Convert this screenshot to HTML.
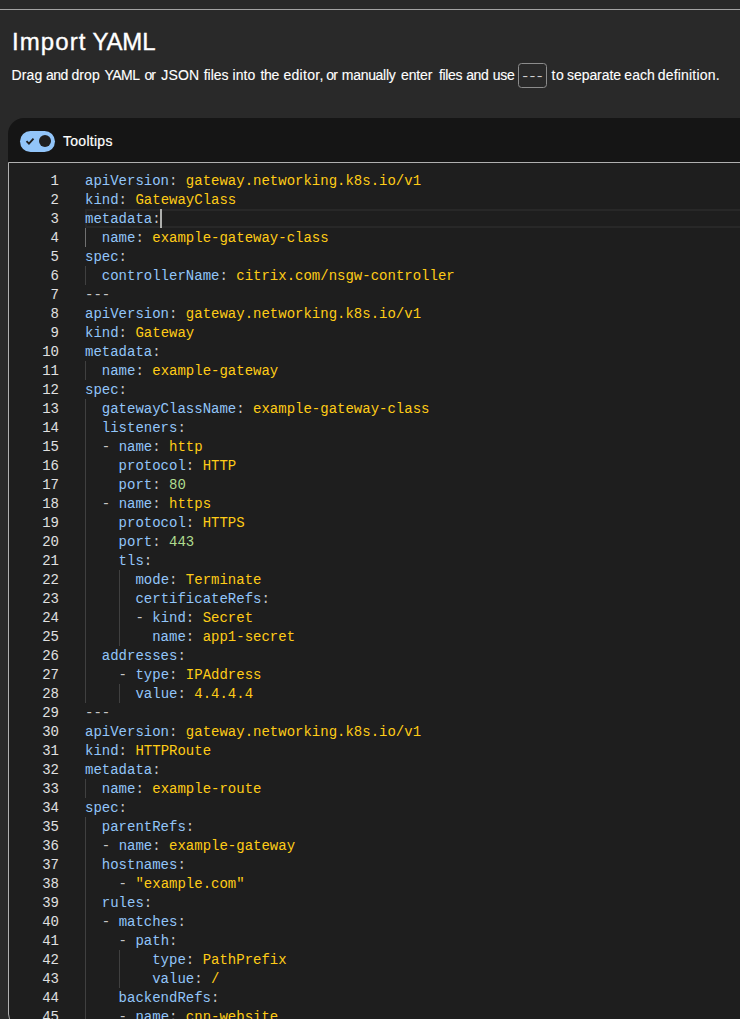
<!DOCTYPE html>
<html lang="en">
<head>
<meta charset="utf-8">
<title>Import YAML</title>
<style>
html,body{margin:0;padding:0;}
body{width:740px;height:1019px;overflow:hidden;background:#292929;color:#fff;font-family:"Liberation Sans",sans-serif;position:relative;}
.topline{position:absolute;left:0;top:9px;width:740px;height:1px;background:#a3a3a3;}
h1{position:absolute;left:12px;top:26px;margin:0;font-size:24px;line-height:31px;font-weight:400;white-space:nowrap;letter-spacing:0;-webkit-text-stroke:0.35px #fff;}
p.desc{position:absolute;left:12px;top:64px;margin:0;font-size:14px;line-height:21px;white-space:nowrap;}
p.desc .w{position:absolute;top:0.5px;-webkit-text-stroke:0.12px #fff;}
p.desc code{position:absolute;left:506px;top:-1px;box-sizing:border-box;font-family:"Liberation Mono",monospace;font-size:12px;line-height:27px;height:25px;width:29px;text-align:center;border:1px solid #8c8c8c;border-radius:3.5px;color:#d2d2d2;overflow:hidden;}
p.desc code b{display:inline-block;position:relative;left:-1.6px;font-weight:400;letter-spacing:-1.66px;margin-right:-1.66px;transform:scaleX(1.3);transform-origin:50% 50%;}
.card{position:absolute;left:8px;top:118px;width:800px;height:1000px;background:#151515;border-top-left-radius:16px;}
.switch{position:absolute;left:12px;top:13px;width:35px;height:21px;border-radius:11px;background:#92c5f9;}
.switch .knob{position:absolute;left:19px;top:4px;width:12px;height:12px;border-radius:50%;background:#1f1f1f;}
.switch svg{position:absolute;left:5px;top:6px;width:10px;height:9px;}
.lbl{position:absolute;left:55px;top:13px;font-size:14px;line-height:21px;color:#fff;letter-spacing:0.28px;-webkit-text-stroke:0.2px #fff;}
.editor{position:absolute;left:0;top:44px;width:800px;height:868px;box-sizing:border-box;border:1px solid #b0b0b0;border-bottom-left-radius:16px;background:#1e1e1e;padding-top:8px;font-family:"Liberation Mono",monospace;font-size:14px;line-height:19px;}
.ln{position:relative;height:19px;line-height:21px;white-space:pre;}
.no{position:absolute;left:0;top:0;width:50px;text-align:right;color:#e0e0e0;}
.tx{position:absolute;left:76px;top:0;right:0;height:19px;}
.ln.cur .tx{box-sizing:border-box;box-shadow:inset 0 0 0 2px #282828;}
i.cursor{position:absolute;left:75px;top:0;width:2px;height:19px;background:#aeafad;}
i.g{position:absolute;top:0;width:1px;height:19px;background:#404040;}
i.g.a{background:#707070;}
.k{color:#92c5f9}.s{color:#ffcc17}.n{color:#afdc8f}.d{color:#c7c7c7}
</style>
</head>
<body>
<div class="topline"></div>
<h1><span style="letter-spacing:1.1px">Import</span> <span style="letter-spacing:-0.2px;margin-left:-0.8px">YAML</span></h1>
<p class="desc"><span class="w" style="left:-0.6px;letter-spacing:0.17px">Drag</span> <span class="w" style="left:33.9px;letter-spacing:-0.45px">and</span> <span class="w" style="left:59.4px;letter-spacing:0.13px">drop</span> <span class="w" style="left:92.4px;letter-spacing:-0.50px">YAML</span> <span class="w" style="left:132.5px;letter-spacing:-1.10px">or</span> <span class="w" style="left:149.3px;letter-spacing:0.20px">JSON</span> <span class="w" style="left:191.8px;letter-spacing:-0.07px">files</span> <span class="w" style="left:220.4px;letter-spacing:0.13px">into</span> <span class="w" style="left:248.5px;letter-spacing:-0.40px">the</span> <span class="w" style="left:271.4px;letter-spacing:0.30px">editor,</span> <span class="w" style="left:314.3px;letter-spacing:-0.90px">or</span> <span class="w" style="left:329.8px;letter-spacing:-0.30px">manually</span> <span class="w" style="left:389.0px;letter-spacing:-0.12px">enter</span> <span class="w" style="left:426.9px;letter-spacing:-0.35px">files</span> <span class="w" style="left:454.2px;letter-spacing:-0.40px">and</span> <span class="w" style="left:480.8px;letter-spacing:-0.35px">use</span> <code><b>---</b></code> <span class="w" style="left:539.6px;letter-spacing:0.50px">to</span> <span class="w" style="left:555.0px;letter-spacing:-0.06px">separate</span> <span class="w" style="left:612.3px;letter-spacing:0.07px">each</span> <span class="w" style="left:645.8px;letter-spacing:0.18px">definition.</span></p>
<div class="card">
  <div class="switch"><svg viewBox="0 0 10 9"><path d="M1.5 4.1 L3.95 6.55 L8.5 1.6" fill="none" stroke="#1f1f1f" stroke-width="1.9"/></svg><div class="knob"></div></div>
  <div class="lbl">Tooltips</div>
  <div class="editor">
<div class="ln"><span class="no">1</span><span class="tx"><span class="k">apiVersion</span><span class="d">:</span> <span class="s">gateway.networking.k8s.io/v1</span></span></div>
<div class="ln"><span class="no">2</span><span class="tx"><span class="k">kind</span><span class="d">:</span> <span class="s">GatewayClass</span></span></div>
<div class="ln cur"><span class="no">3</span><span class="tx"><span class="k">metadata</span><span class="d">:</span><i class="cursor"></i></span></div>
<div class="ln"><span class="no">4</span><span class="tx"><i class="g a" style="left:0.0px"></i>  <span class="k">name</span><span class="d">:</span> <span class="s">example-gateway-class</span></span></div>
<div class="ln"><span class="no">5</span><span class="tx"><span class="k">spec</span><span class="d">:</span></span></div>
<div class="ln"><span class="no">6</span><span class="tx"><i class="g" style="left:0.0px"></i>  <span class="k">controllerName</span><span class="d">:</span> <span class="s">citrix.com/nsgw-controller</span></span></div>
<div class="ln"><span class="no">7</span><span class="tx"><span class="d">---</span></span></div>
<div class="ln"><span class="no">8</span><span class="tx"><span class="k">apiVersion</span><span class="d">:</span> <span class="s">gateway.networking.k8s.io/v1</span></span></div>
<div class="ln"><span class="no">9</span><span class="tx"><span class="k">kind</span><span class="d">:</span> <span class="s">Gateway</span></span></div>
<div class="ln"><span class="no">10</span><span class="tx"><span class="k">metadata</span><span class="d">:</span></span></div>
<div class="ln"><span class="no">11</span><span class="tx"><i class="g" style="left:0.0px"></i>  <span class="k">name</span><span class="d">:</span> <span class="s">example-gateway</span></span></div>
<div class="ln"><span class="no">12</span><span class="tx"><span class="k">spec</span><span class="d">:</span></span></div>
<div class="ln"><span class="no">13</span><span class="tx"><i class="g" style="left:0.0px"></i>  <span class="k">gatewayClassName</span><span class="d">:</span> <span class="s">example-gateway-class</span></span></div>
<div class="ln"><span class="no">14</span><span class="tx"><i class="g" style="left:0.0px"></i>  <span class="k">listeners</span><span class="d">:</span></span></div>
<div class="ln"><span class="no">15</span><span class="tx"><i class="g" style="left:0.0px"></i>  <span class="d">-</span> <span class="k">name</span><span class="d">:</span> <span class="s">http</span></span></div>
<div class="ln"><span class="no">16</span><span class="tx"><i class="g" style="left:0.0px"></i>    <span class="k">protocol</span><span class="d">:</span> <span class="s">HTTP</span></span></div>
<div class="ln"><span class="no">17</span><span class="tx"><i class="g" style="left:0.0px"></i>    <span class="k">port</span><span class="d">:</span> <span class="n">80</span></span></div>
<div class="ln"><span class="no">18</span><span class="tx"><i class="g" style="left:0.0px"></i>  <span class="d">-</span> <span class="k">name</span><span class="d">:</span> <span class="s">https</span></span></div>
<div class="ln"><span class="no">19</span><span class="tx"><i class="g" style="left:0.0px"></i>    <span class="k">protocol</span><span class="d">:</span> <span class="s">HTTPS</span></span></div>
<div class="ln"><span class="no">20</span><span class="tx"><i class="g" style="left:0.0px"></i>    <span class="k">port</span><span class="d">:</span> <span class="n">443</span></span></div>
<div class="ln"><span class="no">21</span><span class="tx"><i class="g" style="left:0.0px"></i>    <span class="k">tls</span><span class="d">:</span></span></div>
<div class="ln"><span class="no">22</span><span class="tx"><i class="g" style="left:0.0px"></i><i class="g" style="left:33.6px"></i>      <span class="k">mode</span><span class="d">:</span> <span class="s">Terminate</span></span></div>
<div class="ln"><span class="no">23</span><span class="tx"><i class="g" style="left:0.0px"></i><i class="g" style="left:33.6px"></i>      <span class="k">certificateRefs</span><span class="d">:</span></span></div>
<div class="ln"><span class="no">24</span><span class="tx"><i class="g" style="left:0.0px"></i><i class="g" style="left:33.6px"></i>      <span class="d">-</span> <span class="k">kind</span><span class="d">:</span> <span class="s">Secret</span></span></div>
<div class="ln"><span class="no">25</span><span class="tx"><i class="g" style="left:0.0px"></i><i class="g" style="left:33.6px"></i>        <span class="k">name</span><span class="d">:</span> <span class="s">app1-secret</span></span></div>
<div class="ln"><span class="no">26</span><span class="tx"><i class="g" style="left:0.0px"></i>  <span class="k">addresses</span><span class="d">:</span></span></div>
<div class="ln"><span class="no">27</span><span class="tx"><i class="g" style="left:0.0px"></i>    <span class="d">-</span> <span class="k">type</span><span class="d">:</span> <span class="s">IPAddress</span></span></div>
<div class="ln"><span class="no">28</span><span class="tx"><i class="g" style="left:0.0px"></i><i class="g" style="left:33.6px"></i>      <span class="k">value</span><span class="d">:</span> <span class="s">4.4.4.4</span></span></div>
<div class="ln"><span class="no">29</span><span class="tx"><span class="d">---</span></span></div>
<div class="ln"><span class="no">30</span><span class="tx"><span class="k">apiVersion</span><span class="d">:</span> <span class="s">gateway.networking.k8s.io/v1</span></span></div>
<div class="ln"><span class="no">31</span><span class="tx"><span class="k">kind</span><span class="d">:</span> <span class="s">HTTPRoute</span></span></div>
<div class="ln"><span class="no">32</span><span class="tx"><span class="k">metadata</span><span class="d">:</span></span></div>
<div class="ln"><span class="no">33</span><span class="tx"><i class="g" style="left:0.0px"></i>  <span class="k">name</span><span class="d">:</span> <span class="s">example-route</span></span></div>
<div class="ln"><span class="no">34</span><span class="tx"><span class="k">spec</span><span class="d">:</span></span></div>
<div class="ln"><span class="no">35</span><span class="tx"><i class="g" style="left:0.0px"></i>  <span class="k">parentRefs</span><span class="d">:</span></span></div>
<div class="ln"><span class="no">36</span><span class="tx"><i class="g" style="left:0.0px"></i>  <span class="d">-</span> <span class="k">name</span><span class="d">:</span> <span class="s">example-gateway</span></span></div>
<div class="ln"><span class="no">37</span><span class="tx"><i class="g" style="left:0.0px"></i>  <span class="k">hostnames</span><span class="d">:</span></span></div>
<div class="ln"><span class="no">38</span><span class="tx"><i class="g" style="left:0.0px"></i>    <span class="d">-</span> <span class="s">"example.com"</span></span></div>
<div class="ln"><span class="no">39</span><span class="tx"><i class="g" style="left:0.0px"></i>  <span class="k">rules</span><span class="d">:</span></span></div>
<div class="ln"><span class="no">40</span><span class="tx"><i class="g" style="left:0.0px"></i>  <span class="d">-</span> <span class="k">matches</span><span class="d">:</span></span></div>
<div class="ln"><span class="no">41</span><span class="tx"><i class="g" style="left:0.0px"></i>    <span class="d">-</span> <span class="k">path</span><span class="d">:</span></span></div>
<div class="ln"><span class="no">42</span><span class="tx"><i class="g" style="left:0.0px"></i><i class="g" style="left:33.6px"></i>        <span class="k">type</span><span class="d">:</span> <span class="s">PathPrefix</span></span></div>
<div class="ln"><span class="no">43</span><span class="tx"><i class="g" style="left:0.0px"></i><i class="g" style="left:33.6px"></i>        <span class="k">value</span><span class="d">:</span> <span class="s">/</span></span></div>
<div class="ln"><span class="no">44</span><span class="tx"><i class="g" style="left:0.0px"></i>    <span class="k">backendRefs</span><span class="d">:</span></span></div>
<div class="ln"><span class="no">45</span><span class="tx"><i class="g" style="left:0.0px"></i>    <span class="d">-</span> <span class="k">name</span><span class="d">:</span> <span class="s">cnn-website</span></span></div>
  </div>
</div>
</body>
</html>
